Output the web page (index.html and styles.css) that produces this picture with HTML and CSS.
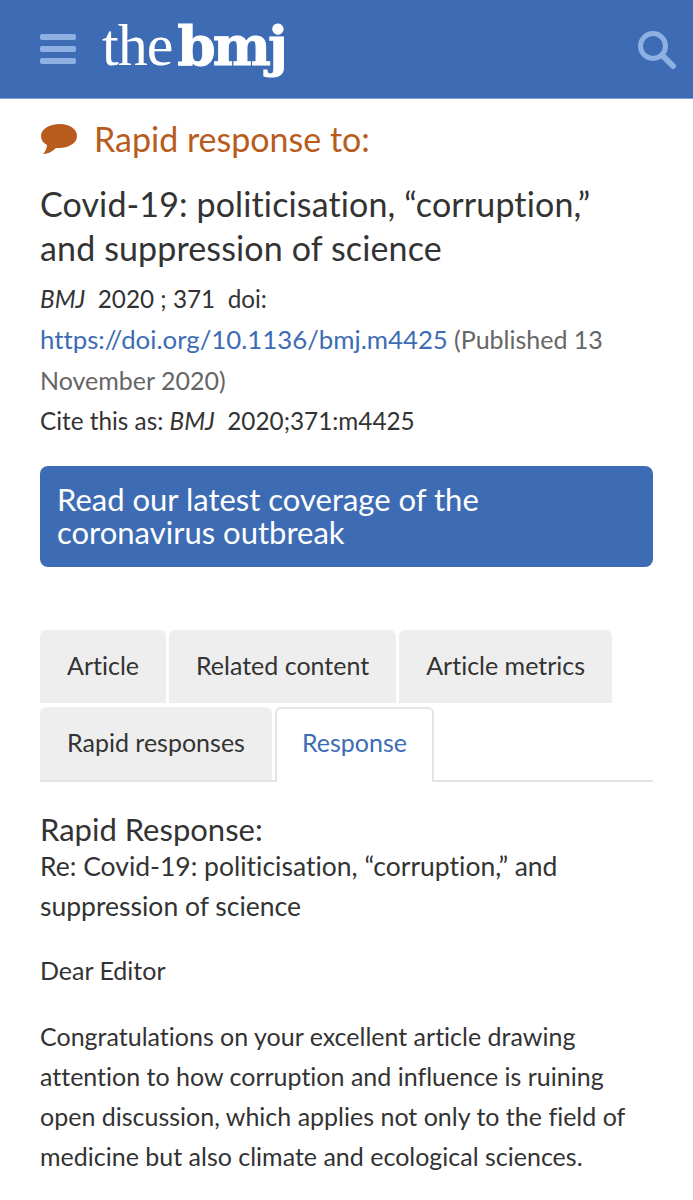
FILE: index.html

```html
<!DOCTYPE html>
<html lang="en">
<head>
  <meta charset="UTF-8">
  <title>Rapid response - The BMJ</title>
  <meta name="viewport" content="width=device-width, initial-scale=1.0">
  <link rel="stylesheet" href="styles.css">
</head>
<body>
  <header class="topbar">
    <div class="menu-icon"><span></span><span></span><span></span></div>
    <div class="logo"><span class="logo-the">the</span><span class="logo-bmj">bmj</span></div>
    <svg class="search-icon" width="40" height="40" viewBox="0 0 40 40">
      <circle cx="16" cy="17" r="12.5" fill="none" stroke="#8fb0e3" stroke-width="5"/>
      <path d="M26 27l10 10" stroke="#8fb0e3" stroke-width="6" stroke-linecap="round"/>
    </svg>
  </header>

  <main class="content">
    <div class="rr-title">
      <svg width="38" height="33" viewBox="0 0 38 33">
        <path d="M20 1C9 1 1 6 1 13c0 4 2 7 6 9 0 3-2 7-4 9 5 0 10-3 13-6 2 0 3 0 5 0 9-1 16-5 16-12S30 1 20 1z" fill="#b85c1e"/>
      </svg>
      <span>Rapid response to:</span>
    </div>

    <h1 class="article-title">Covid-19: politicisation, “corruption,” and suppression of science</h1>

    <p class="citation"><em>BMJ</em>&nbsp; 2020 ; 371 &nbsp;doi:<br><a class="doi" href="#">https://doi.org/10.1136/bmj.m4425</a> <span class="muted">(Published 13</span><br><span class="muted">November 2020)</span></p>
    <p class="cite-as">Cite this as: <em>BMJ</em>&nbsp; 2020;371:m4425</p>

    <a class="banner" href="#">Read our latest coverage of the coronavirus outbreak</a>

    <nav class="tabs">
      <a class="tab" href="#">Article</a>
      <a class="tab" href="#">Related content</a>
      <a class="tab" href="#">Article metrics</a>
      <a class="tab" href="#">Rapid responses</a>
      <a class="tab active" href="#">Response</a>
    </nav>

    <h2 class="response-head">Rapid Response:</h2>
    <p class="response-re">Re: Covid-19: politicisation, “corruption,” and suppression of science</p>
    <p class="para">Dear Editor</p>
    <p class="para">Congratulations on your excellent article drawing attention to how corruption and influence is ruining open discussion, which applies not only to the field of medicine but also climate and ecological sciences.</p>
  </main>
</body>
</html>
```

FILE: styles.css

```css
body {
  margin: 0;
  font-family: 'Lato', sans-serif;
  font-variant-ligatures: none;
  color: #333;
  background: #fff;
  overflow: hidden;
}
a {
  color: #3d6cb5;
  text-decoration: none;
}
.topbar {
  height: 98px;
  background: #3d6cb5;
  border-bottom: 1px solid #7f9fd0;
  display: flex;
  align-items: center;
  padding: 0 16px 0 40px;
}
.menu-icon {
  width: 36px;
  display: flex;
  flex-direction: column;
  gap: 6px;
  margin-right: 26px;
}
.menu-icon span {
  height: 6px;
  background: #8fb0e3;
  border-radius: 2px;
}
.logo {
  flex: 1;
  color: #fff;
  line-height: 1;
  margin-top: -9px;
  white-space: nowrap;
}
.logo-the {
  font-family: 'Liberation Serif', serif;
  font-size: 60px;
  letter-spacing: -1px;
}
.logo-bmj {
  font-family: 'DejaVu Serif', serif;
  font-weight: bold;
  font-size: 55px;
  letter-spacing: -3px;
  -webkit-text-stroke: 1px #fff;
  margin-left: 5px;
}
.content {
  padding: 0 40px;
}
.rr-title {
  display: flex;
  align-items: center;
  gap: 16px;
  margin-top: 21px;
  font-size: 34px;
  line-height: 38px;
  color: #b85c1e;
}
.article-title {
  margin: 24px 0 0;
  padding-right: 30px;
  font-size: 34px;
  letter-spacing: 0.13px;
  font-weight: 400;
  line-height: 44px;
}
.citation, .cite-as {
  margin: 0;
  font-size: 24.3px;
  line-height: 40px;
}
.citation {
  margin-top: 9px;
}
.doi {
  font-size: 25.8px;
}
.muted {
  color: #666;
  font-size: 25px;
}
.banner {
  display: block;
  margin-top: 25px;
  padding: 17px 17px 18px;
  background: #3d6cb5;
  color: #fff;
  border-radius: 8px;
  font-size: 31px;
  line-height: 33px;
}
.tabs {
  display: flex;
  flex-wrap: wrap;
  gap: 4px 3px;
  margin-top: 63px;
  border-bottom: 2px solid #e4e4e4;
}
.tab {
  background: #eee;
  color: #333;
  font-size: 25px;
  line-height: 28px;
  padding: 21px 27px 24px;
  border-radius: 6px 6px 0 0;
}
.tab.active {
  background: #fff;
  color: #3d6cb5;
  border: 2px solid #e4e4e4;
  border-bottom: none;
  margin-bottom: -2px;
  padding: 19px 25px 26px;
}
.response-head {
  margin: 30px 0 0;
  font-size: 31px;
  font-weight: 400;
  line-height: 34px;
}
.response-re {
  margin: 0;
  font-size: 26.5px;
  line-height: 40px;
}
.para {
  margin: 24px 0 0;
  font-size: 25px;
  line-height: 40px;
}
.para + .para {
  margin-top: 26px;
}
```
